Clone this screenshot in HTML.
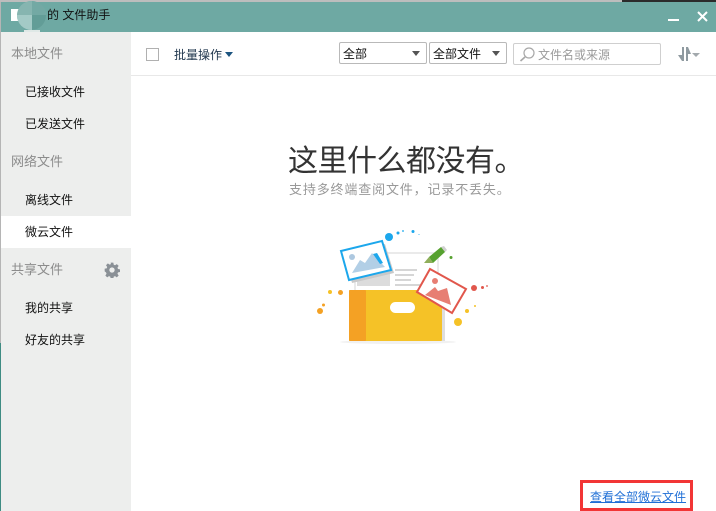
<!DOCTYPE html>
<html><head><meta charset="utf-8"><style>
html,body{margin:0;padding:0;width:716px;height:511px;overflow:hidden;background:#fff}
body{position:relative;font-family:"Liberation Sans","Microsoft YaHei","WenQuanYi Zen Hei","Noto Sans CJK SC",sans-serif;font-size:12px;color:#111}
.a{position:absolute;white-space:nowrap}
.h{color:#8c8c8c;font-size:13px;left:11px}
.i{left:25px;font-size:12px;color:#111}
.sel{position:absolute;top:42px;height:22px;background:#fff;border:1px solid #b9b9b9;border-radius:2px;box-sizing:border-box;line-height:22px;padding-left:3px;font-size:12px}
.tri{position:absolute;width:0;height:0;border-left:4px solid transparent;border-right:4px solid transparent;border-top:5px solid #555}
</style></head><body>
<div class="a" style="left:0;top:0;width:716px;height:2px;background:#bdbdbd"></div>
<div class="a" style="left:622px;top:0;width:94px;height:2px;background:#2b2b2b"></div>
<div class="a" style="left:1px;top:2px;width:715px;height:30px;background:#6ea9a3"></div>
<div class="a" style="left:11px;top:9px;width:8px;height:12px;background:#fff"></div>
<div class="a" style="left:17px;top:1px;width:29px;height:29px;border-radius:50%;overflow:hidden;background:#7fb0aa">
<div style="position:absolute;left:0;top:0;width:15px;height:14px;background:#86b5b0"></div>
<div style="position:absolute;left:15px;top:0;width:14px;height:14px;background:#73a9a4"></div>
<div style="position:absolute;left:0;top:14px;width:15px;height:15px;background:#a3cac6"></div>
<div style="position:absolute;left:15px;top:14px;width:14px;height:15px;background:#629d97"></div></div>
<div class="a" style="left:24px;top:30px;width:16px;height:3px;background:#dfe8e6"></div>
<div class="a" style="left:47px;top:8px;font-size:12px;color:#111;line-height:14px">的 文件助手</div>
<div class="a" style="left:668px;top:19px;width:11px;height:2px;background:#fff"></div>
<svg class="a" style="left:697px;top:11px" width="11" height="11" viewBox="0 0 11 11"><path d="M1 1L10 10M10 1L1 10" stroke="#fff" stroke-width="2"/></svg>

<div class="a" style="left:0;top:2px;width:1px;height:341px;background:#b5b5b5"></div>
<div class="a" style="left:0;top:343px;width:1px;height:168px;background:#3f8c83"></div>
<div class="a" style="left:1px;top:32px;width:130px;height:479px;background:#edeeed"></div>
<div class="a" style="left:1px;top:216px;width:130px;height:32px;background:#fff"></div>
<div class="a h" style="top:43px">本地文件</div>
<div class="a i" style="top:83px">已接收文件</div>
<div class="a i" style="top:115px">已发送文件</div>
<div class="a h" style="top:151px">网络文件</div>
<div class="a i" style="top:191px">离线文件</div>
<div class="a i" style="top:223px">微云文件</div>
<div class="a h" style="top:259px">共享文件</div>
<svg class="a" style="left:104px;top:262px" width="16" height="16" viewBox="0 0 24 24"><path fill="#8a9096" fill-rule="evenodd" d="M10 1h4l.6 3.1 2 .8 2.6-1.8 2.8 2.8-1.8 2.6.8 2 3 .5v4l-3 .6-.8 2 1.8 2.6-2.8 2.8-2.6-1.8-2 .8-.6 3h-4l-.6-3-2-.8-2.6 1.8-2.8-2.8 1.8-2.6-.8-2L1 14v-4l3-.5.8-2L3 4.9l2.8-2.8 2.6 1.8 2-.8zM12 8a4 4 0 1 0 0 8 4 4 0 0 0 0-8z"/></svg>
<div class="a i" style="top:299px">我的共享</div>
<div class="a i" style="top:331px">好友的共享</div>

<div class="a" style="left:131px;top:75px;width:585px;height:1px;background:#e8e8e8"></div>
<div class="a" style="left:146px;top:48px;width:11px;height:11px;border:1px solid #b0b0b0;background:#fff"></div>
<div class="a" style="left:174px;top:46px;color:#22384f">批量操作</div>
<div class="tri" style="left:225px;top:52px;border-top-color:#1d5580"></div>
<div class="sel" style="left:339px;width:88px">全部</div>
<div class="tri" style="left:412px;top:51px"></div>
<div class="sel" style="left:429px;width:78px">全部文件</div>
<div class="tri" style="left:492px;top:51px"></div>
<div class="sel" style="left:513px;top:43px;width:148px;height:22px;border-color:#cfcfcf;color:#9a9a9a;padding-left:24px">文件名或来源</div>
<svg class="a" style="left:519px;top:46px" width="17" height="16" viewBox="0 0 17 16"><circle cx="10" cy="7" r="5" fill="none" stroke="#a8a8a8" stroke-width="1.2"/><path d="M6 11L1.500 15" stroke="#a8a8a8" stroke-width="1.600"/></svg>
<svg class="a" style="left:676px;top:46px" width="26" height="17" viewBox="0 0 26 17"><path d="M6 1h2v14H6L2 9h4zM10 1h2l3 7h-3v7h-2z" fill="#8f9aa0"/><path d="M16 7h8l-4 4z" fill="#a3a9ad"/></svg>

<div class="a" style="left:288px;top:144px;font-size:30px;line-height:36px;color:#333;letter-spacing:-.5px">这里什么都没有。</div>
<div class="a" style="left:289px;top:182px;font-size:13px;line-height:16px;color:#999;letter-spacing:.85px">支持多终端查阅文件，记录不丢失。</div>

<svg class="a" style="left:310px;top:220px" width="190" height="135" viewBox="0 0 190 135">
<ellipse cx="88" cy="122" rx="58" ry="2" fill="#f1f1f1"/>
<rect x="45" y="33" width="83" height="60" fill="#fff" stroke="#e4e4e4" stroke-width="1.500"/>
<rect x="47" y="47" width="33" height="19" fill="#dcdcdc"/>
<path d="M85 50h22M85 55h19M85 60h16M85 65h25" stroke="#d6d6d6" stroke-width="2"/>
<rect x="130" y="72" width="5" height="49" fill="#dedede"/>
<rect x="39" y="70" width="93" height="51" rx="1" fill="#f5c227"/>
<rect x="39" y="70" width="17" height="51" rx="1" fill="#f4a124"/>
<rect x="80" y="82" width="25" height="11" rx="5.500" fill="#fff"/>
<polygon points="34,34 75,24 84,53 42,63" fill="#c9c9c9"/>
<polygon points="31,31 72,21 81,50 39,60" fill="#fff" stroke="#1ca7ec" stroke-width="2"/>
<circle cx="42" cy="37" r="3" fill="#adc8e0"/>
<polygon points="42,53 50,40 55,43 62,33 75,47" fill="#b2cfe6"/>
<polygon points="63,34 67,33 73,43 70,44" fill="#1ca7ec"/>
<polygon points="120,49 156,69 142,93 107,72" fill="#fff" stroke="#e1574c" stroke-width="2"/>
<circle cx="125" cy="61" r="3" fill="#e77e73"/>
<polygon points="115,75 125,67 128,71 137,68 141,85" fill="#e77e73"/>
<polygon points="131,27 134,26 137,30 135,32" fill="#cfcfcf"/>
<polygon points="119,37 131,27 135,32 123,43" fill="#56a12f"/>
<polygon points="114,43 119,37 123,43" fill="#8fae5a"/>
<circle cx="79" cy="17" r="4" fill="#1ca7ec"/><circle cx="88" cy="13" r="1.500" fill="#1ca7ec"/><circle cx="93" cy="11" r="1" fill="#4bbcf0"/><circle cx="103" cy="11.500" r="1.500" fill="#1ca7ec"/><circle cx="109" cy="14.500" r=".5" fill="#1ca7ec"/>
<circle cx="141" cy="37.500" r="1.500" fill="#56a12f"/>
<circle cx="164" cy="68" r="3" fill="#e1574c"/><circle cx="172.500" cy="67.500" r="1.500" fill="#e1574c"/><circle cx="177" cy="66" r="1" fill="#e77e73"/>
<circle cx="20" cy="72" r="2" fill="#f5c227"/><circle cx="30.500" cy="72.500" r="2.500" fill="#f4a124"/><circle cx="13.500" cy="85" r="1.500" fill="#f4a124"/><circle cx="10" cy="91" r="3" fill="#f4a124"/>
<circle cx="157" cy="91" r="2" fill="#f5c227"/><circle cx="165" cy="86" r="1" fill="#f5c227"/><circle cx="148" cy="102" r="4" fill="#f5c227"/>
</svg>

<div class="a" style="left:580px;top:480px;width:113px;height:31px;border:3px solid #f23535;box-sizing:border-box"></div>
<div class="a" style="left:590px;top:490px;font-size:12px;line-height:15px;color:#1f6fd6;text-decoration:underline">查看全部微云文件</div>
</body></html>
